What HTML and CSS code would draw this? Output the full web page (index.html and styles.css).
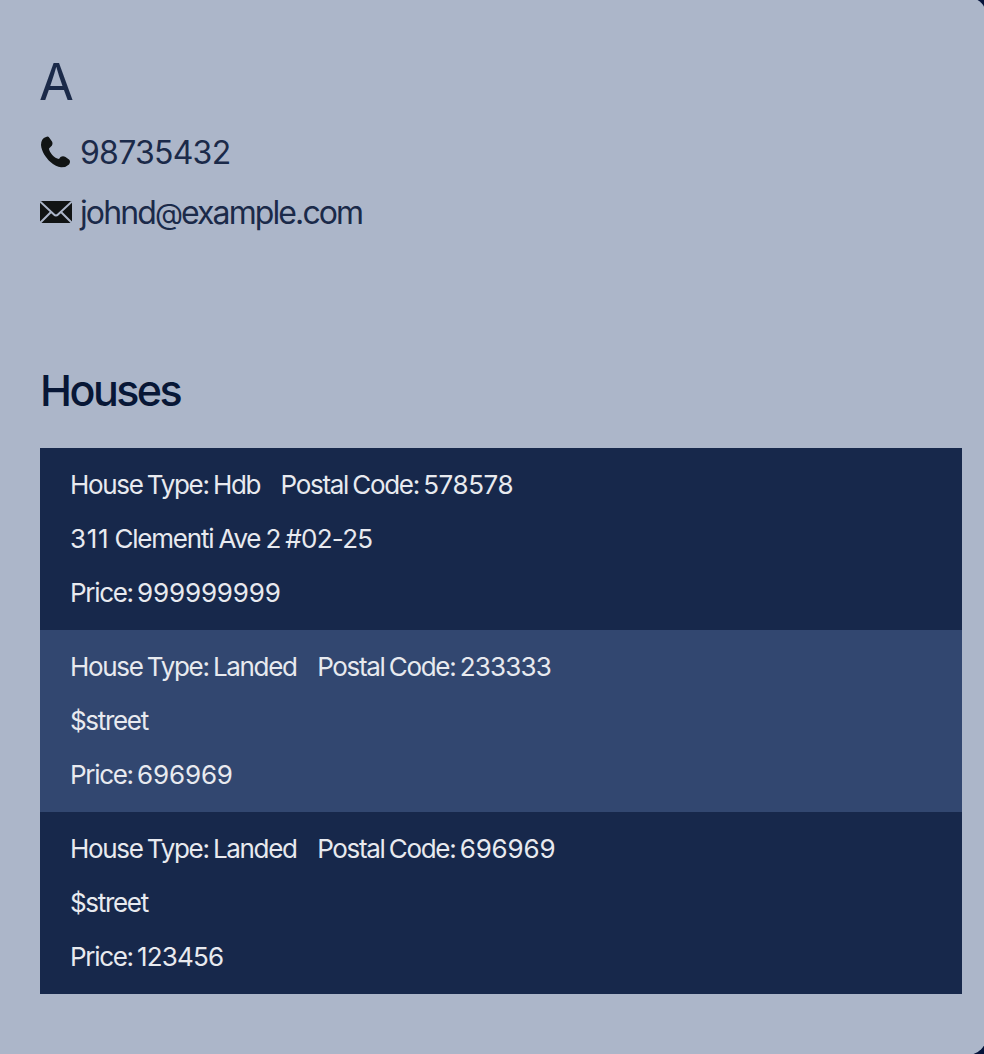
FILE: index.html
```html
<!DOCTYPE html>
<html lang="en">
<head>
<meta charset="utf-8">
<title>Contact details</title>
<link rel="stylesheet" href="styles.css">
</head>
<body>
<main class="card">
  <h1 class="name">A</h1>
  <div class="contact">
    <svg class="icon" viewBox="0 0 32 32"><path fill="#111414" d="M6 1Q8.5-0.5 9.5 2L12 5.5Q13.5 9 10.5 11L9 12.5C9 16 14.5 22.5 19 23L20.5 21Q23 19.5 25.5 21L29 23.5Q31 25.5 29 28.5Q26 31.5 21 31.3Q16 31 10.5 26C6 22 1.5 15.5 1 9Q1 2.5 6 1Z"/></svg>
    <span class="phone">98735432</span>
  </div>
  <div class="contact">
    <svg class="icon" viewBox="0 0 32 32"><path fill="#111414" d="M0 5H32V27H0Z"/><path fill="none" stroke="#acb6c9" stroke-width="2" d="M0 5.5L14 18.5Q16 20.5 18 18.5L32 5.5M0 27L11 16M32 27L21 16"/></svg>
    <span class="email">johnd<span class="at">@</span>example.com</span>
  </div>
  <h2 class="heading">Houses</h2>
  <section class="houses">
    <article class="house">
      <div class="row"><span class="type">House Type: Hdb</span><span class="postal">Postal Code: <span class="num-mid">578578</span></span></div>
      <div class="row address"><span><span class="num-open">311</span> Clementi Ave 2 <span class="unit">#02-25</span></span></div>
      <div class="row"><span>Price: <span class="num-wide">999999999</span></span></div>
    </article>
    <article class="house alt">
      <div class="row"><span class="type">House Type: Landed</span><span class="postal">Postal Code: <span class="num-tight">233333</span></span></div>
      <div class="row">$street</div>
      <div class="row"><span>Price: <span class="num-wide">696969</span></span></div>
    </article>
    <article class="house">
      <div class="row"><span class="type">House Type: Landed</span><span class="postal">Postal Code: <span class="num-wide">696969</span></span></div>
      <div class="row">$street</div>
      <div class="row"><span>Price: <span class="num-tight">123456</span></span></div>
    </article>
  </section>
</main>
</body>
</html>
```
FILE: styles.css
```css
* { box-sizing: border-box; }
html { height: 100%; overflow: hidden; background: #05133a; }
body { margin: 0; font-family: Inter, "Liberation Sans", sans-serif; }
.card {
  width: 987px;
  height: 1058px;
  margin-top: -3px;
  padding: 52px 25px 0 40px;
  border-radius: 0 20px 20px 0;
  background: #acb6c9;
  color: #1b2a49;
}
.name { margin: 0 0 7px -1px; height: 66px; line-height: 66px; font-size: 50.5px; font-weight: 400; }
.contact { display: flex; align-items: center; gap: 8px; height: 60px; font-size: 32px; white-space: nowrap; }
.phone { letter-spacing: -0.75px; }
.icon { width: 32px; height: 32px; flex: none; }
.email { letter-spacing: -1.9px; }
.at { font-size: 29px; }
.heading { margin: 106px 0 0 0; height: 84px; line-height: 84px; font-size: 43px; font-weight: 500; letter-spacing: -2.55px; color: #081736; }
.houses { margin-top: 16px; }
.house { height: 182px; padding: 10px 30px; background: #17284b; color: #e8eaef; font-size: 26px; letter-spacing: -1.32px; word-spacing: -1.7px; }
.alt { background: #324770; }
.row { display: flex; gap: 20.5px; height: 54px; line-height: 54px; white-space: pre; }
.address { letter-spacing: -1.2px; word-spacing: -1px; }
.num-wide { letter-spacing: -0.15px; }
.num-mid { letter-spacing: -0.4px; }
.num-tight { letter-spacing: -0.8px; }
.num-open { letter-spacing: 0.7px; }
.unit { letter-spacing: -0.7px; }
```
